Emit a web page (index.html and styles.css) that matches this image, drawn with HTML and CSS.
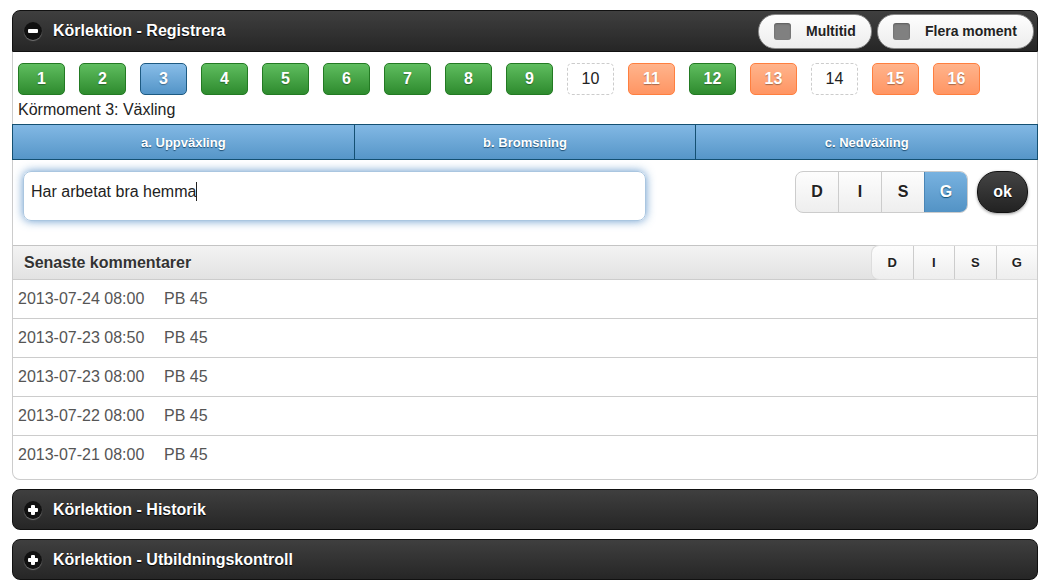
FILE: index.html
```html
<!DOCTYPE html>
<html lang="sv">
<head>
<meta charset="utf-8">
<title>Körlektion</title>
<link rel="stylesheet" href="styles.css">
</head>
<body>
<div class="page">
  <section class="coll open">
    <div class="coll-head">
      <span class="ico"><span class="bar"></span></span>
      <span class="coll-title">Körlektion - Registrera</span>
      <div class="head-btns">
        <div class="chk-btn"><span class="box"></span><span>Multitid</span></div>
        <div class="chk-btn"><span class="box"></span><span>Flera moment</span></div>
      </div>
    </div>
    <div class="coll-body">
      <div class="nums">
        <span class="nb green">1</span>
        <span class="nb green">2</span>
        <span class="nb blue">3</span>
        <span class="nb green">4</span>
        <span class="nb green">5</span>
        <span class="nb green">6</span>
        <span class="nb green">7</span>
        <span class="nb green">8</span>
        <span class="nb green">9</span>
        <span class="nb empty">10</span>
        <span class="nb orange">11</span>
        <span class="nb green">12</span>
        <span class="nb orange">13</span>
        <span class="nb empty">14</span>
        <span class="nb orange">15</span>
        <span class="nb orange">16</span>
      </div>
      <div class="moment">Körmoment 3: Växling</div>
      <nav class="navbar">
        <span class="nav-item">a. Uppväxling</span>
        <span class="nav-item">b. Bromsning</span>
        <span class="nav-item">c. Nedväxling</span>
      </nav>
      <div class="entry">
        <div class="txt">Har arbetat bra hemma<span class="caret"></span></div>
        <div class="ctrls">
          <div class="seg big">
            <span class="s">D</span><span class="s">I</span><span class="s">S</span><span class="s on">G</span>
          </div>
          <span class="ok">ok</span>
        </div>
      </div>
      <div class="recent">
        <span class="recent-title">Senaste kommentarer</span>
        <div class="seg small">
          <span class="s">D</span><span class="s">I</span><span class="s">S</span><span class="s">G</span>
        </div>
      </div>
      <ul class="list">
        <li><span class="dt">2013-07-24 08:00</span><span>PB 45</span></li>
        <li><span class="dt">2013-07-23 08:50</span><span>PB 45</span></li>
        <li><span class="dt">2013-07-23 08:00</span><span>PB 45</span></li>
        <li><span class="dt">2013-07-22 08:00</span><span>PB 45</span></li>
        <li class="last"><span class="dt">2013-07-21 08:00</span><span>PB 45</span></li>
      </ul>
    </div>
  </section>
  <section class="coll closed">
    <div class="coll-head">
      <span class="ico"><span class="bar"></span><span class="bar v"></span></span>
      <span class="coll-title">Körlektion - Historik</span>
    </div>
  </section>
  <section class="coll closed">
    <div class="coll-head">
      <span class="ico"><span class="bar"></span><span class="bar v"></span></span>
      <span class="coll-title">Körlektion - Utbildningskontroll</span>
    </div>
  </section>
</div>
</body>
</html>
```
FILE: styles.css
```css
* { box-sizing: border-box; }
html, body { margin: 0; padding: 0; background: #fff; }
body { font-family: "Liberation Sans", Arial, Helvetica, sans-serif; color: #333; }
.page { padding: 10px 9px 0 12px; display: flex; flex-direction: column; gap: 9px; }
.coll-head {
  display: flex; align-items: center;
  background: linear-gradient(#3f3f3f, #262626);
  border: 1px solid #111;
  color: #fff; font-weight: bold; font-size: 16px;
  text-shadow: 0 1px 1px #000;
  padding: 0 3px 0 11px;
}
.open .coll-head { height: 42px; border-radius: 8px 8px 0 0; }
.closed .coll-head { height: 41px; border-radius: 8px; }
.ico {
  width: 18px; height: 18px; border-radius: 50%;
  background: #111; position: relative; flex: none;
  box-shadow: 0 1px 1px rgba(255,255,255,.35);
  margin-right: 11px;
}
.ico .bar { position: absolute; left: 4px; top: 7px; width: 10px; height: 4px; background: #fff; border-radius: 1px; }
.ico .bar.v { left: 7px; top: 4px; width: 4px; height: 10px; }
.coll-title { flex: 1; }
.head-btns { display: flex; gap: 5px; }
.chk-btn {
  display: flex; align-items: center; height: 35px;
  border: 1px solid #888; border-radius: 17px;
  background: linear-gradient(#fefefe, #ececec);
  color: #222; font-size: 14px; text-shadow: 0 1px 0 #fff;
  padding: 0 14px 0 15px;
}
.chk-btn .box { width: 17px; height: 17px; border-radius: 3px; background: #808080; margin-right: 15px; box-shadow: inset 0 1px 2px rgba(0,0,0,.3); }
.chk-btn:first-child { width: 114px; }
.chk-btn:last-child { width: 157px; }

.coll-body { border: 1px solid #ccc; border-top: 0; border-radius: 0 0 8px 8px; }
.nums { display: flex; gap: 14px; padding: 11px 0 0 5px; }
.nb {
  width: 47px; height: 32px; border-radius: 5px;
  display: flex; align-items: center; justify-content: center;
  font-size: 16px; font-weight: bold; color: #fff;
  text-shadow: 0 1px 1px rgba(0,0,0,.35);
}
.nb.green { background: linear-gradient(#5fbd5f, #2e8b2e); border: 1px solid #237a23; }
.nb.blue { background: linear-gradient(#88bde8, #5394c7); border: 1px solid #1d5a82; }
.nb.orange { background: linear-gradient(#ffb48c, #ff9563); border: 1px solid #ff7f3f; }
.nb.empty { border: 1px dashed #ccc; color: #222; font-weight: normal; text-shadow: none; }
.moment { font-size: 16px; line-height: 20px; padding: 5px 0 0 5px; color: #222; height: 29px; }
.navbar {
  display: flex; height: 36px; margin: 0 -1px;
  border: 1px solid #145072;
  background: linear-gradient(#82b8e4, #5696c8);
}
.nav-item {
  flex: 1; display: flex; align-items: center; justify-content: center;
  color: #fff; font-weight: bold; font-size: 13px;
  text-shadow: 0 1px 1px #1f4f73;
}
.nav-item + .nav-item { border-left: 1px solid #145072; }
.entry { display: flex; justify-content: space-between; align-items: flex-start; height: 85px; padding: 11px 9px 0 10px; }
.txt {
  width: 623px; height: 50px; border-radius: 8px;
  border: 1px solid #aac6e0;
  box-shadow: 0 0 10px rgba(56,123,190,.75);
  font-size: 16px; color: #222; padding: 10px 7px;
}
.caret { display: inline-block; width: 1px; height: 19px; background: #222; vertical-align: -4px; }
.ctrls { display: flex; gap: 9px; }
.seg { display: flex; border: 1px solid #ccc; border-radius: 8px; overflow: hidden; background: linear-gradient(#fdfdfd, #eeeeee); }
.seg .s { display: flex; align-items: center; justify-content: center; font-weight: bold; color: #222; text-shadow: 0 1px 0 #fff; }
.seg .s + .s { border-left: 1px solid #ccc; }
.seg.big { height: 42px; width: 173px; }
.seg.big .s { flex: 1; font-size: 16px; }
.seg .s.on { background: linear-gradient(#78b2e0, #5393c5); color: #fff; text-shadow: 0 1px 1px #145072; border-left-color: #4a86b6; }
.ok {
  width: 51px; height: 42px; border-radius: 20px;
  background: linear-gradient(#444, #222); border: 1px solid #111;
  color: #fff; font-weight: bold; font-size: 16px;
  display: flex; align-items: center; justify-content: center;
  box-shadow: 0 1px 3px rgba(0,0,0,.4);
  text-shadow: 0 1px 1px #000;
}
.recent {
  display: flex; justify-content: space-between; align-items: stretch;
  height: 35px; border-top: 1px solid #c4c4c4; border-bottom: 1px solid #ccc;
  background: linear-gradient(#f3f3f3, #e2e2e2);
}
.recent-title { display: flex; align-items: center; padding-left: 11px; font-weight: bold; font-size: 16px; color: #333; text-shadow: 0 1px 0 #fff; }
.seg.small { width: 166px; border-radius: 8px 0 0 8px; margin-top: -1px; margin-bottom: -1px; border: 1px solid #ddd; border-right: 0; }
.seg.small .s { flex: 1; font-size: 13px; }
.list { list-style: none; margin: 0; padding: 0; }
.list li { display: flex; height: 39px; align-items: center; padding: 0 0 1px 5px; border-bottom: 1px solid #ccc; font-size: 16px; color: #555; }
.list li.last { border-bottom: 0; height: 43px; padding-bottom: 6px; }
.list .dt { width: 146px; }
```
